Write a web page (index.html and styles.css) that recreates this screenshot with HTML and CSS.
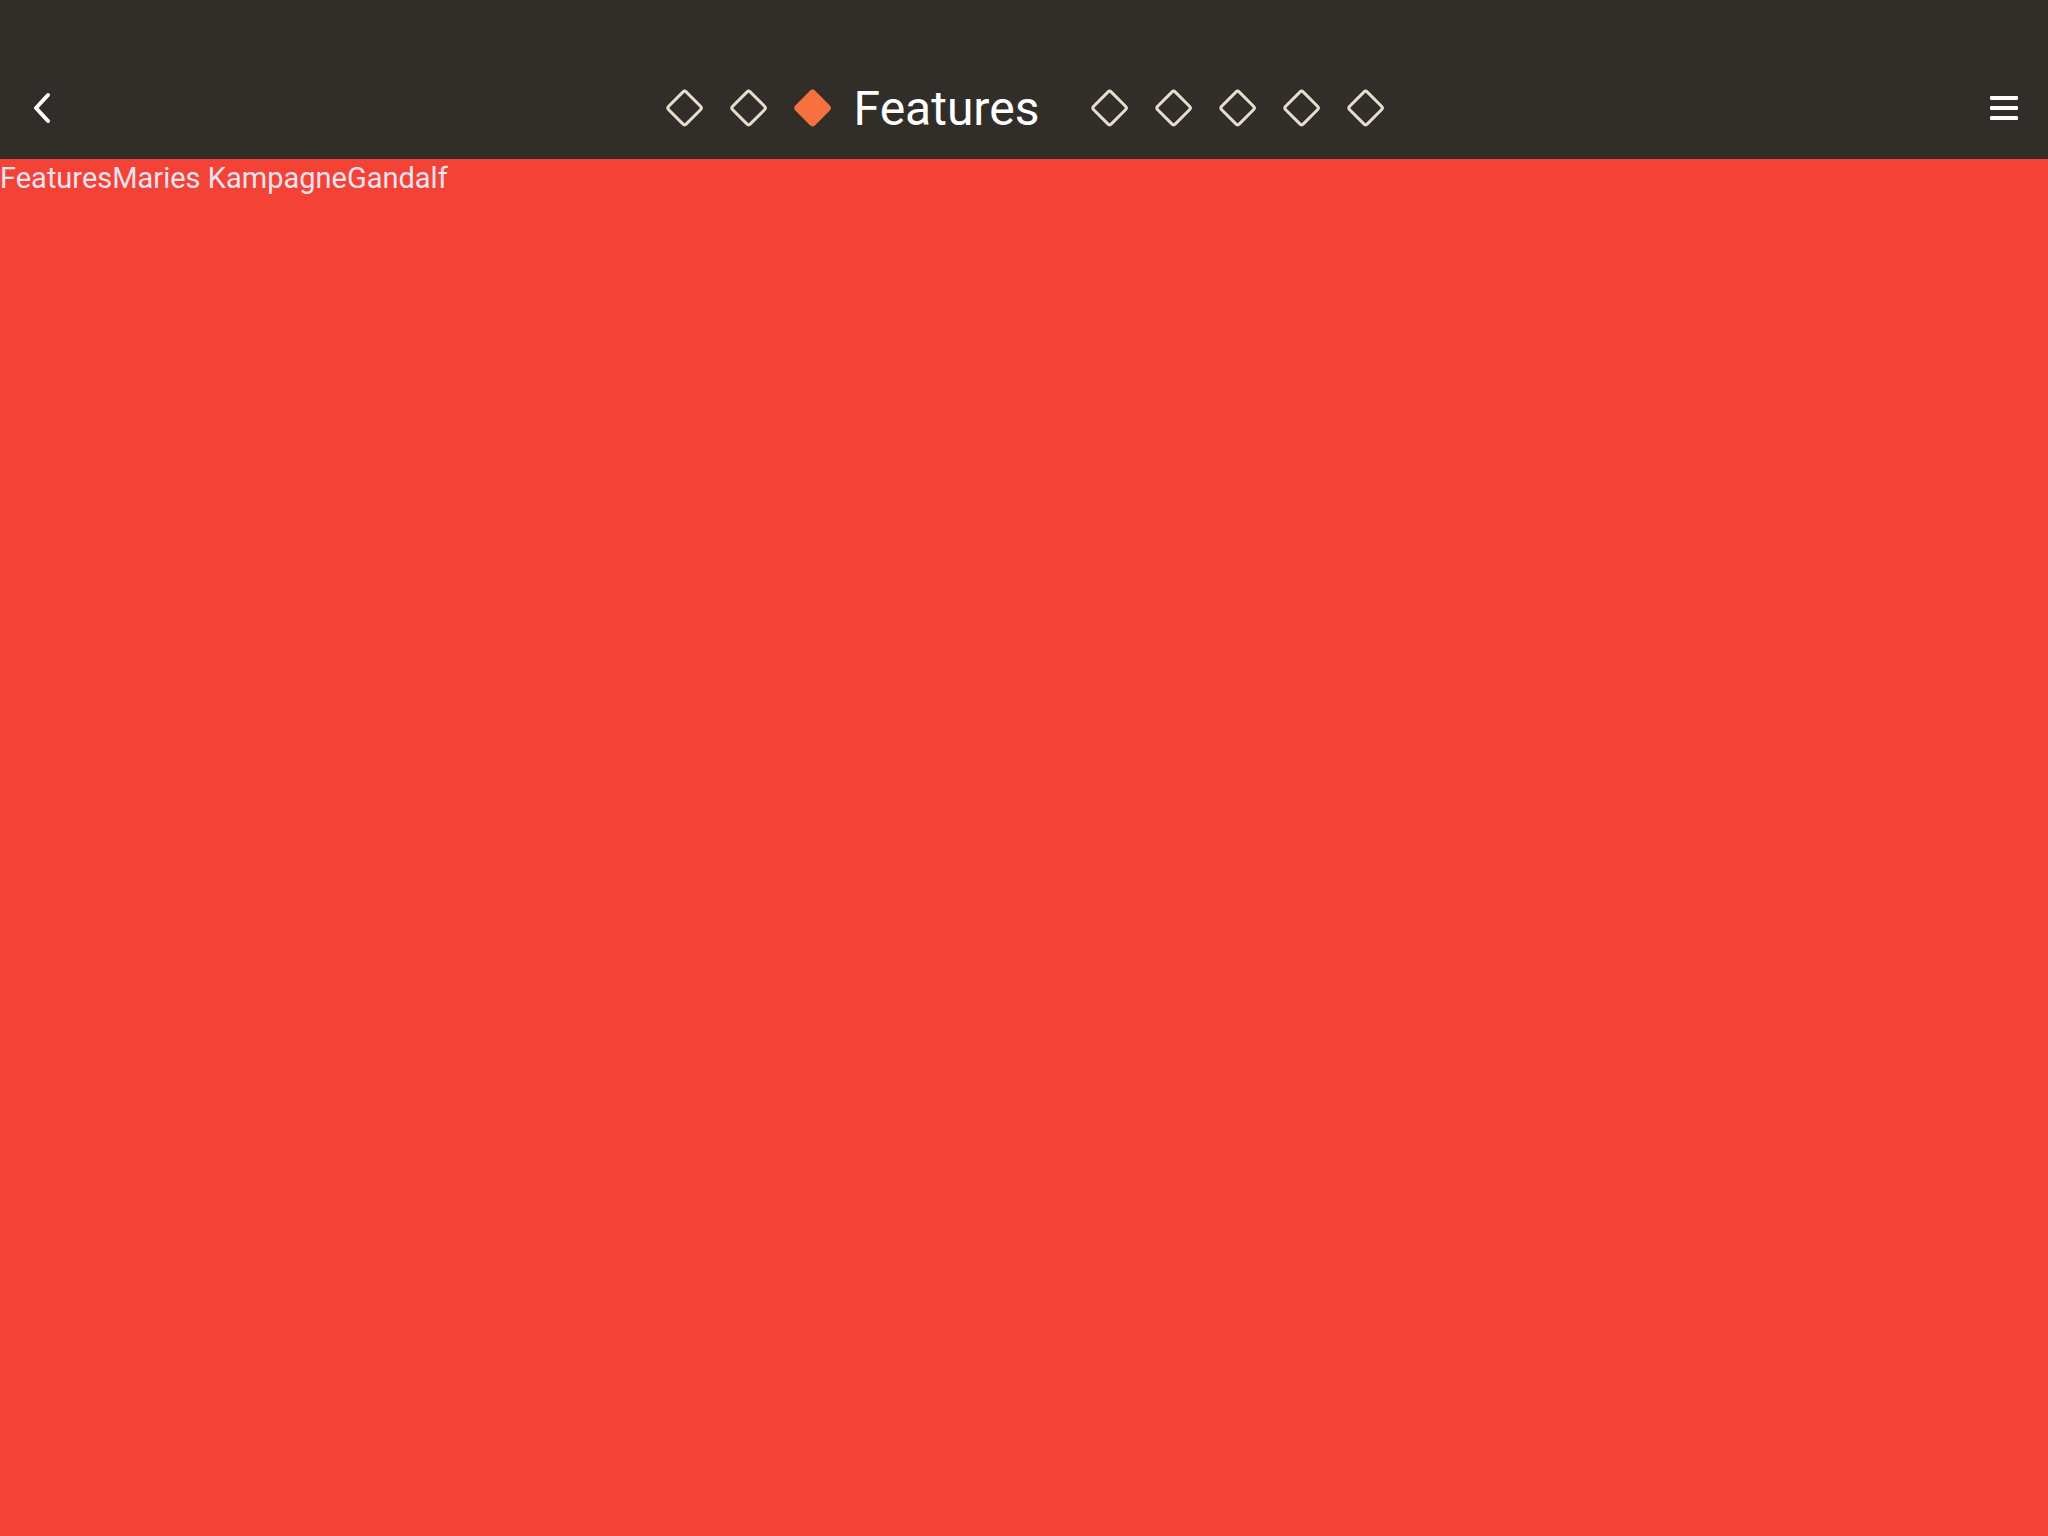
FILE: index.html
```html
<!DOCTYPE html>
<html lang="de">
<head>
<meta charset="utf-8">
<title>Features</title>
<link rel="stylesheet" href="styles.css">
</head>
<body>
<header class="topbar">
  <div class="bar">
    <button class="icon-btn back" aria-label="Zurück">
      <svg width="20" height="32" viewBox="0 0 20 32"><path d="M16 3 L4 16 L16 29" fill="none" stroke="#ffffff" stroke-width="4" stroke-linecap="round" stroke-linejoin="round"/></svg>
    </button>
    <nav class="steps">
      <span class="step"><span class="diamond"></span></span>
      <span class="step"><span class="diamond"></span></span>
      <span class="step active"><span class="slot"><span class="diamond filled"></span></span><span class="label">Features</span></span>
      <span class="step"><span class="diamond"></span></span>
      <span class="step"><span class="diamond"></span></span>
      <span class="step"><span class="diamond"></span></span>
      <span class="step"><span class="diamond"></span></span>
      <span class="step"><span class="diamond"></span></span>
    </nav>
    <button class="icon-btn menu" aria-label="Menü">
      <span class="line"></span><span class="line"></span><span class="line"></span>
    </button>
  </div>
</header>
<main class="content">
  <span>Features</span><span>Maries Kampagne</span><span>Gandalf</span>
</main>
</body>
</html>
```
FILE: styles.css
```css
html, body {
  margin: 0;
  padding: 0;
  height: 100%;
}
body {
  background: #f44336;
  font-family: Roboto, "Noto Sans", sans-serif;
  display: flex;
  flex-direction: column;
}
.topbar {
  background: #312e2a;
  height: 159px;
  padding-top: 56px;
  box-sizing: border-box;
  flex: none;
}
.bar {
  height: 103px;
  display: flex;
  align-items: center;
  justify-content: space-between;
  padding: 0 30px 0 32px;
  position: relative;
}
.icon-btn {
  background: none;
  border: 0;
  padding: 0;
  display: flex;
  align-items: center;
  justify-content: center;
  cursor: pointer;
}
.back {
  width: 20px;
  height: 32px;
  margin-top: 1px;
}
.menu {
  flex-direction: column;
  gap: 6px;
  width: 28px;
}
.menu .line {
  display: block;
  width: 28px;
  height: 4px;
  background: #ffffff;
  border-radius: 1px;
}
.steps {
  position: absolute;
  left: 50%;
  top: 50%;
  transform: translate(-50%, -50%);
  display: flex;
  align-items: center;
  padding-left: 2px;
}
.step, .slot {
  display: flex;
  align-items: center;
  justify-content: center;
  width: 64px;
  height: 48px;
}
.step.active {
  width: auto;
  justify-content: flex-start;
  margin-right: 38px;
}
.diamond {
  display: block;
  width: 28px;
  height: 28px;
  box-sizing: border-box;
  border: 3px solid #e8dccc;
  border-radius: 4px;
  transform: rotate(45deg);
  flex: none;
}
.diamond.filled {
  background: #f7703f;
  border-color: #f7703f;
}
.label {
  color: #ffffff;
  font-size: 48px;
  margin-left: 9px;
  line-height: 1;
  padding-top: 3px;
}
.content {
  flex: 1;
  color: #e8e3ee;
  font-size: 29px;
  line-height: 38px;
  display: flex;
  align-items: flex-start;
}
```
